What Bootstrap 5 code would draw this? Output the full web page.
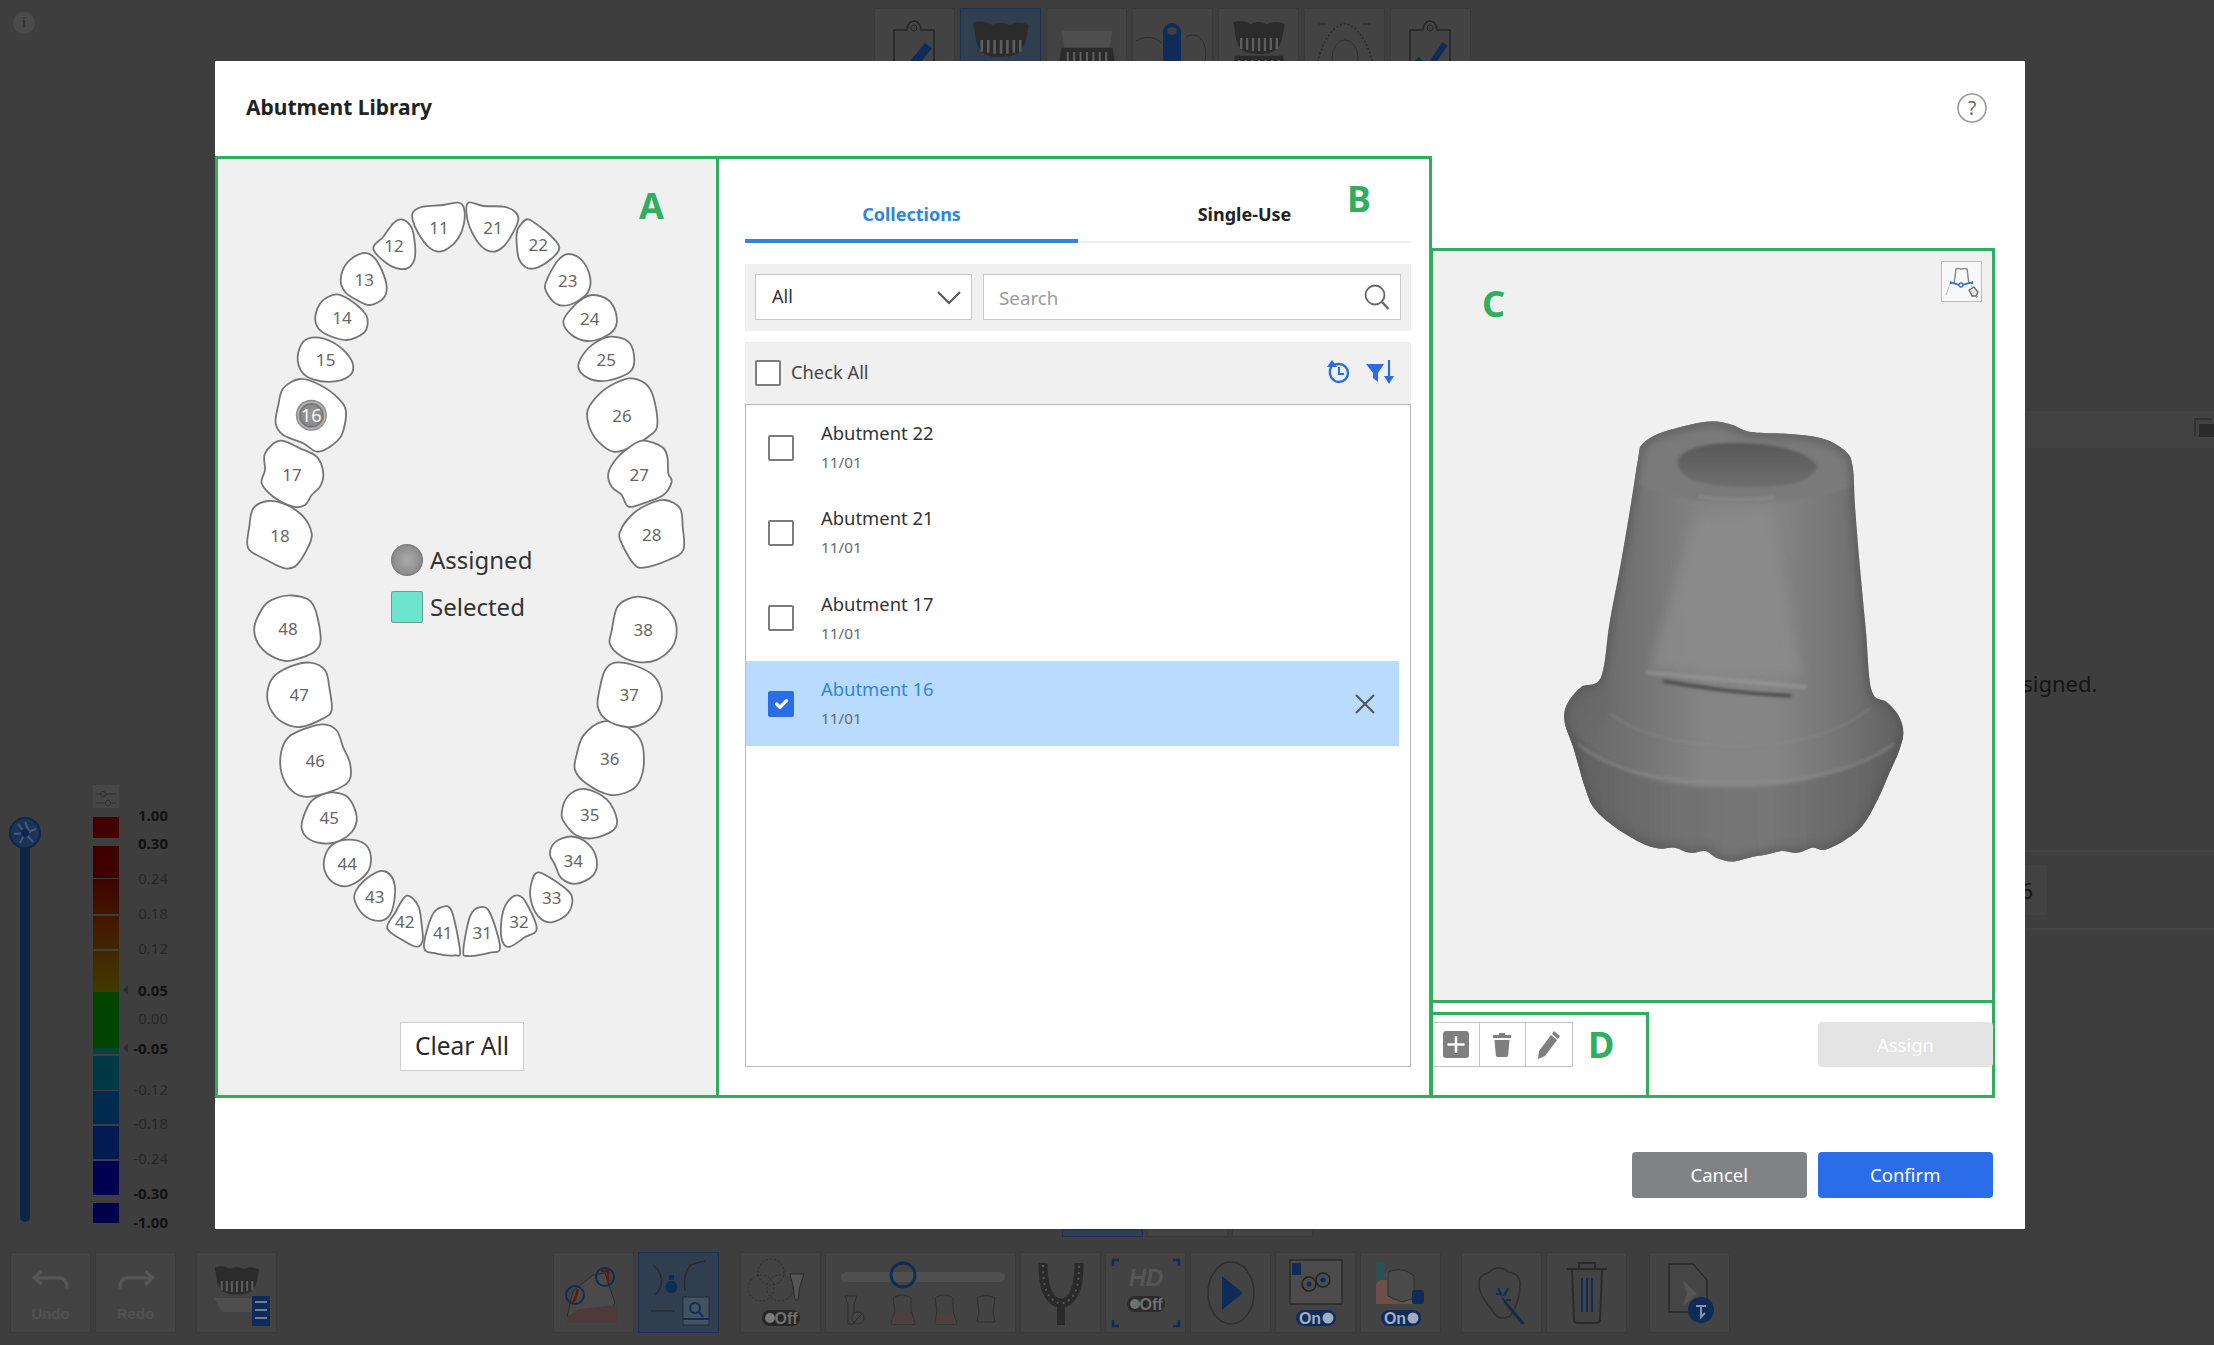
<!DOCTYPE html>
<html lang="en">
<head>
<meta charset="utf-8">
<title>Abutment Library</title>
<link href="https://cdn.jsdelivr.net/npm/bootstrap@5.3.0/dist/css/bootstrap.min.css" rel="stylesheet">
<style>
html,body{height:100%;margin:0;overflow:hidden;background:#3e3e3e;font-family:"Noto Sans","Open Sans",sans-serif;color:#212121}
.app-shell{height:1345px;width:2214px;position:relative;overflow:hidden}
.top-tools{height:88px;padding-top:8px;flex:none}
.info-dot{width:22px;height:22px;margin:4px 0 0 13px;border-radius:50%;background:#4a4a4a;color:#333;font:bold 14px/22px "Liberation Serif",serif;text-align:center}
.tb{background:#434343;border:1px solid #3a3a3a;flex:none;height:81px;width:81px;position:relative;display:flex;align-items:center;justify-content:center}
.tb svg{display:block}
.tb-on{background:#303f50;border-color:#1b3350}
.top-tools .tb{height:80px}
.tg-top{margin-left:839px;gap:5px}
.mid-row{flex:1 1 auto;min-height:0}
.slider-col{margin-left:9px;margin-top:729px;width:32px}
.slider-track{width:10px;height:374px;margin:-1px auto 0;background:#0e2646;border-radius:0 0 5px 5px}
.leg-col{margin-left:52px;margin-top:697px;width:26px}
.leg-set{height:23px;background:#474747;margin-bottom:9px}
.leg-lab{margin-top:717px;width:49px;font-size:15px;line-height:20px;text-align:right;color:#272727}
.leg-lab b{color:#111;font-weight:700}
.leg-lab div{position:relative}
.leg-tri{position:absolute;left:4px;top:5px;width:0;height:0;border:5px solid transparent;border-right-color:#2c2c2c;border-left:0}
.right-col{margin-left:auto;width:214px;padding-left:30px}
.r-inner{margin-left:-30px;height:100%;padding-top:323px;font-size:22px;color:#141414}
.r-band{height:37px;background:#424242;padding:5px 0 0}
.r-msg{margin-top:220px;margin-left:-144px;height:30px;line-height:30px;white-space:nowrap}
.r-line{height:2px;background:#444}
.r-line-a{margin-top:152px}
.r-box{margin:13px 0;width:47px;height:50px;background:#424242;line-height:50px;text-align:right;padding-right:14px}
.bottom-tools{flex:none;height:93px;padding-left:10px}
.bg{gap:4px}
.bg-b{margin-left:20px}.bg-c{margin-left:276px}.bg-d{margin-left:21px}.bg-e{margin-left:20px}.bg-f{margin-left:22px}
.bg .tb-wide{width:191px}
.tb-cap{position:absolute;bottom:10px;left:0;right:0;text-align:center;font:700 15px "Liberation Sans Narrow","Liberation Sans",sans-serif;color:#505050}
.tg-txt{font-family:"Liberation Sans Narrow","Liberation Sans",sans-serif;font-size:16px;font-weight:700;text-anchor:middle}
.modal-content.lib-dialog{position:absolute;left:215px;top:60.5px;width:1809.5px;height:1168.5px;background:#fff;border:0;border-radius:0;display:block}
.lib-head{height:95.5px;padding:0 38px 1px 31px}
.lib-title{font-size:21px;font-weight:700;color:#222;margin:0}
.help-dot{width:30px;height:30px}
.pane{border:3px solid #2fae5e;position:relative;flex:none}
.pane-a{width:504px;height:942px;background:#f0f0f0}
.pane-b{width:716px;height:942px;margin-left:-3px;padding:0 18px 0 26px;background:#fff}
.col-c{width:565px;margin-left:-2px;margin-top:92px;flex:none}
.pane-c1{height:755px;background:#f0f0f0}
.pane-c2{height:98px;margin-top:-3px;background:#fff}
.pane-d{width:219px;height:86px;margin-left:-3px;margin-bottom:-3px;padding-top:7px;flex:none}
.big-tag{position:absolute;font-size:36px;line-height:40px;font-weight:700;color:#2fae5e}
.tag-a{left:421px;top:27px}
.tag-b{left:628px;top:20px}
.tag-c{left:49px;top:33px}
.tag-d{left:155px;top:10px}
.teeth-svg{position:absolute;left:0;top:0;width:498px;height:936px}
.teeth-svg path{fill:#fff;stroke:#757575;stroke-width:1.8}
.teeth-svg text{font:400 17px "Noto Sans",sans-serif;fill:#666;text-anchor:middle;dominant-baseline:central}
.teeth-svg text.tooth-on{fill:#f8f8f8;font-size:18px}
.legend-wrap{position:relative;margin:377px 0 0 173px;font-size:24px;color:#333}
.legend-row{height:47.5px}
.sw-assigned{width:32px;height:32px;border-radius:50%;background:radial-gradient(circle,#ababab 0,#8d8d8d 62%,#6f6f6f 72%,#c0c0c0 82%,#808080 100%);margin-right:7px;flex:none}
.sw-selected{width:32px;height:32px;border-radius:2px;background:#6de4cd;border:1.5px solid #6f9a94;margin-right:7px;flex:none}
.btn.clear-btn{position:absolute;left:182px;top:863px;width:124px;height:49px;background:#fff;border:1px solid #cfcfcf;border-radius:0;font-size:24.5px;line-height:1;color:#2a2a2a;padding:0}
.lib-tabs{height:84px;border-bottom:2px solid #eee}
.lib-tabs .nav-link{flex:1 1 0;height:84px;padding:0 0 17px;display:flex;align-items:flex-end;justify-content:center;font-size:18px;line-height:24px;font-weight:700;color:#222;background:none;border:0;border-radius:0}
.lib-tabs .nav-link.active{color:#2f86dc;border-bottom:4px solid #2f86dc;margin-bottom:-2px;height:84px;padding-bottom:13px}
.filter-bar{margin-top:21px;height:67px;padding:10px;background:#f0f0f0;gap:11px}
.form-select.lib-select{width:217px;height:46px;flex:none;border:1.5px solid #c8c8c8;border-radius:0;padding:0 0 2px 16px;font-size:18px;color:#333;box-shadow:none;background-position:right 9px center;background-size:26px 16px;background-image:url("data:image/svg+xml,%3csvg xmlns='http://www.w3.org/2000/svg' viewBox='0 0 26 16'%3e%3cpath fill='none' stroke='%23555' stroke-width='2' d='M2 3l11 11L24 3'/%3e%3c/svg%3e")}
.search-box{flex:1 1 auto;position:relative}
.form-control.lib-search{height:46px;border:1.5px solid #c8c8c8;border-radius:0;padding:1px 50px 0 15px;font-size:18.8px}
.form-control.lib-search::placeholder{color:#9c9c9c;opacity:1}
.search-ic{position:absolute;right:10px;top:9px}
.check-bar{margin-top:11px;height:62px;padding:0 17px 2px 10px;background:#f0f0f0;font-size:18.3px;color:#444}
.form-check-input.lib-ck{width:26px;height:26px;margin:0;flex:none;border:2px solid #7c7c7c;border-radius:2px;background-color:#fff;box-shadow:none}
.form-check-input.lib-ck:checked{background-color:#2b6de8;border-color:#2b6de8;background-size:22px}
.check-bar .form-check-input{margin-top:2px}
.check-bar label{margin-left:10px}
.list-shell{height:663px;border:1.5px solid #bbb;border-top-width:1px;background:#fff;overflow:hidden}
.list-group.lib-list{margin-right:11px;border-radius:0}
.list-group-item.lib-item{height:85.33px;border:0;border-radius:0;padding:0 24px 0 22px;display:flex;align-items:center;background:transparent;font-size:18.4px;color:#333}
.list-group-item.lib-item.picked{background:#b9dbfd;color:#2f86dc}
.lib-item .item-txt{margin-left:27px;flex:1 1 auto;margin-top:-2px}
.item-name{line-height:24px;font-size:18.4px}
.item-date{line-height:20px;margin-top:7px;font-size:15.3px;color:#6a6a6a}
.view-thumb{position:absolute;right:10px;top:10px;width:41px;height:41px;background:#f8f8f8;border:1.5px solid #bdbdbd}
.model-svg{display:block;margin-left:127px;margin-top:165px}
.tool-btn{width:46.5px;height:45px;background:#fff;border:1.5px solid #c4c4c4;border-left-width:0;display:flex;align-items:center;justify-content:center;flex:none}
.btn.assign-btn{width:175px;height:45px;margin:19px -1px 0 auto;background:#e4e4e4;border:0;border-radius:4px;color:#fff;font-size:18.5px;padding:0;opacity:1}
.foot-row{margin-top:54px;padding-right:31.5px;gap:10.5px}
.btn.foot-btn{width:175.5px;height:46px;border:0;border-radius:4px;color:#fff;font-size:18.5px;padding:0}
.btn-cancel-x{background:#808285}
.btn-confirm-x{background:#2b6de8}
.under-tabs{left:1062px;top:1229px;gap:4px;height:8px}
.under-tabs div{width:81px;height:8px;background:#444;border:1px solid #393939}
.under-tabs div:first-child{background:#303f50;border-color:#1b3350}
</style>
</head>
<body>
<svg width="0" height="0" class="position-absolute">
<defs>
<symbol id="teethU" viewBox="0 0 60 40"><path fill="#2b2b2b" d="M4 4c8-3 14 0 18 2 4-3 10-3 16 0 6-3 12-3 18 0l-3 16c-3 9-8 14-23 14S10 32 7 22z"/><path stroke="#5e5e5e" stroke-width="2.4" d="M12 20v11M18 20v12M24 20v13M30 20v13M36 20v13M42 20v12M48 20v11"/></symbol>
<radialGradient id="ballG"><stop offset="0" stop-color="#9a9a9a"/><stop offset=".66" stop-color="#8a8a8a"/><stop offset=".74" stop-color="#6d6d6d"/><stop offset=".85" stop-color="#b9b9b9"/><stop offset="1" stop-color="#7d7d7d"/></radialGradient>
<linearGradient id="bodyG" x1="0" x2="1" y1="0" y2="0"><stop offset="0" stop-color="#666"/><stop offset=".2" stop-color="#727272"/><stop offset=".42" stop-color="#858585"/><stop offset=".62" stop-color="#858585"/><stop offset=".82" stop-color="#747474"/><stop offset="1" stop-color="#606060"/></linearGradient>
<linearGradient id="lowG" x1="0" x2="1" y1="0" y2="0"><stop offset="0" stop-color="#5e5e5e"/><stop offset=".3" stop-color="#6e6e6e"/><stop offset=".6" stop-color="#747474"/><stop offset="1" stop-color="#5e5e5e"/></linearGradient>
<linearGradient id="holeG" x1="0" x2="0" y1="0" y2="1"><stop offset="0" stop-color="#585858"/><stop offset="1" stop-color="#6e6e6e"/></linearGradient>
<filter id="soft" x="-20%" y="-20%" width="140%" height="140%"><feGaussianBlur stdDeviation="14"/></filter>
<filter id="soft2" x="-20%" y="-60%" width="140%" height="220%"><feGaussianBlur stdDeviation="4"/></filter>
<filter id="soft3" x="-10%" y="-10%" width="120%" height="120%"><feGaussianBlur stdDeviation="10"/></filter>
<clipPath id="modelClip"><path id="modelClipPath"/></clipPath>
</defs>
</svg>

<div class="app-shell d-flex flex-column">
  <div class="top-tools d-flex align-items-start">
    <div class="info-dot">i</div>
    <div class="tg-top d-flex">
      <div class="tb"><svg width="60" height="70" viewBox="0 0 60 70"><path fill="none" stroke="#262626" stroke-width="1.6" d="M9 17h13c0-12 14-12 14 0h13v50H9z"/><circle cx="29" cy="15" r="3" fill="none" stroke="#262626"/><path fill="#0f2c58" d="M40 30l7 5-19 24-10 5 3-11z"/></svg></div>
      <div class="tb tb-on"><svg width="64" height="44" class="mb-3"><use href="#teethU"/></svg></div>
      <div class="tb"><svg width="64" height="44" class="mt-2" viewBox="0 0 60 40"><path fill="#4e4e4e" d="M6 0h48l-3 16H9z"/><path fill="#2b2b2b" d="M6 16h48l3 20H3z"/><path stroke="#5e5e5e" stroke-width="2" d="M12 20v11M18 20v11M24 20v11M30 20v11M36 20v11M42 20v11M48 20v11"/></svg></div>
      <div class="tb"><svg width="78" height="70" viewBox="0 0 78 70"><path fill="none" stroke="#2c2c2c" d="M2 28c10-6 20-4 25 2M2 50c10 4 20 2 25-2M52 24c14-8 24 10 18 26"/><rect x="29" y="10" width="18" height="60" rx="9" fill="#0f2c58"/><ellipse cx="38" cy="18" rx="5" ry="4" fill="#3f3f3f"/></svg></div>
      <div class="tb"><svg width="66" height="60" viewBox="0 0 60 54"><use href="#teethU" width="60" height="36"/><path fill="#2b2b2b" d="M8 34h44l3 20H5z"/><path stroke="#5e5e5e" stroke-width="2" d="M12 38v10M18 38v10M24 38v10M30 38v10M36 38v10M42 38v10M48 38v10"/></svg></div>
      <div class="tb"><svg width="64" height="64" viewBox="0 0 64 64"><ellipse cx="32" cy="42" rx="13" ry="18" fill="none" stroke="#2c2c2c"/><path fill="none" stroke="#2c2c2c" stroke-dasharray="2 2" stroke-width="1.5" d="M4 50C8 25 22 8 32 8s24 17 28 42"/><path fill="none" stroke="#2c2c2c" d="M6 8h8M50 8h8"/></svg></div>
      <div class="tb"><svg width="60" height="70" viewBox="0 0 60 70"><path fill="none" stroke="#262626" stroke-width="1.6" d="M9 17h13c0-12 14-12 14 0h13v50H9z"/><circle cx="29" cy="15" r="3" fill="none" stroke="#262626"/><path fill="none" stroke="#0f2c58" stroke-width="6" d="M16 46l10 11 18-26"/></svg></div>
    </div>
  </div>

  <div class="mid-row d-flex">
    <div class="slider-col flex-none">
      <svg width="32" height="32" viewBox="0 0 32 32"><circle cx="16" cy="16" r="15" fill="#1a3358" stroke="#10254a" stroke-width="2"/><g fill="none" stroke="#415b7d" stroke-width="2"><path d="M16 5l5 11M27 12l-11 4M24 25l-8-9M11 26l5-10M5 17l11-1M9 7l7 9"/></g><circle cx="16" cy="16" r="4" fill="#10254a"/></svg>
      <div class="slider-track"></div>
    </div>
    <div class="leg-col">
      <div class="leg-set"><svg width="26" height="23" viewBox="0 0 26 23"><path fill="none" stroke="#2e2e2e" d="M3 7h5M13 7h10M3 16h10M18 16h5"/><circle cx="10" cy="7" r="2.6" fill="none" stroke="#2e2e2e"/><circle cx="15" cy="16" r="2.6" fill="none" stroke="#2e2e2e"/></svg></div>
      <div style="height:21px;background:#420000"></div>
      <div style="height:32px;margin-top:8px;background:#3e0000"></div>
      <div style="height:35px;margin-top:1px;background:linear-gradient(#3e0300,#421400)"></div>
      <div style="height:33px;margin-top:2px;background:linear-gradient(#421600,#422500)"></div>
      <div style="height:41px;margin-top:2px;background:linear-gradient(#422700,#413a00)"></div>
      <div style="height:56px;background:#004400"></div>
      <div style="height:6px;background:#02443a"></div>
      <div style="height:34px;margin-top:2px;background:#003846"></div>
      <div style="height:33px;margin-top:1px;background:#002a50"></div>
      <div style="height:33px;margin-top:2px;background:#001a52"></div>
      <div style="height:34px;margin-top:2px;background:#000050"></div>
      <div style="height:20px;margin-top:8px;background:#00004c"></div>
    </div>
    <div class="leg-lab">
      <div style="height:28px"><b>1.00</b></div>
      <div style="height:35px"><b>0.30</b></div>
      <div style="height:35px">0.24</div>
      <div style="height:35px">0.18</div>
      <div style="height:42px">0.12</div>
      <div style="height:28px"><span class="leg-tri"></span><b>0.05</b></div>
      <div style="height:30px">0.00</div>
      <div style="height:41px"><span class="leg-tri"></span><b>-0.05</b></div>
      <div style="height:34px">-0.12</div>
      <div style="height:35px">-0.18</div>
      <div style="height:35px">-0.24</div>
      <div style="height:29px"><b>-0.30</b></div>
      <div style="height:20px"><b>-1.00</b></div>
    </div>
    <div class="right-col">
      <div class="r-inner">
        <div class="r-band"><svg width="214" height="24" class="d-block" viewBox="0 0 214 24"><path fill="none" stroke="#2c2c2c" stroke-width="1.5" d="M212 3h-17v17"/><rect x="199" y="8" width="15" height="13" fill="#2a2a2a"/></svg></div>
        <div class="r-msg">No abutment assigned.</div>
        <div class="r-line r-line-a"></div>
        <div class="r-box">16</div>
        <div class="r-line"></div>
      </div>
    </div>
  </div>

  <div class="bottom-tools d-flex align-items-start">
    <div class="d-flex bg">
      <div class="tb"><svg width="40" height="27" class="mb-4" viewBox="0 0 60 40"><path fill="none" stroke="#565656" stroke-width="5" d="M16 6L5 16l11 10M6 16h36c8 0 12 5 12 16"/></svg><span class="tb-cap">Undo</span></div>
      <div class="tb"><svg width="40" height="27" class="mb-4" viewBox="0 0 60 40"><path fill="none" stroke="#565656" stroke-width="5" d="M44 6l11 10-11 10M54 16H18C10 16 6 21 6 32"/></svg><span class="tb-cap">Redo</span></div>
    </div>
    <div class="d-flex bg bg-b">
      <div class="tb"><svg width="70" height="66" viewBox="0 0 70 66"><use href="#teethU" x="6" y="4" width="58" height="34"/><path fill="#4e4e4e" d="M12 38h46l-8 14H20z"/><rect x="50" y="36" width="18" height="30" fill="#0f2c58"/><path stroke="#6c7d97" stroke-width="2" d="M53 42h12M53 50h12M53 58h12"/></svg></div>
    </div>
    <div class="d-flex bg bg-c">
      <div class="tb"><svg width="66" height="68" viewBox="0 0 66 68"><path fill="#4a4a4a" stroke="#2a2a2a" d="M6 58l6-26 20-16 12-2 10 30-6 8-20 4z"/><path fill="#4d3a3a" d="M6 58l12-8 38-4v18H6z"/><circle cx="14" cy="36" r="9" fill="none" stroke="#0f2c58" stroke-width="2"/><circle cx="44" cy="18" r="9" fill="none" stroke="#0f2c58" stroke-width="2"/><path fill="none" stroke="#66170e" stroke-width="2.500" d="M11 44c5-4 4-10 6-14M40 12h7v12"/></svg></div>
      <div class="tb tb-on"><svg width="68" height="72" viewBox="0 0 68 72"><path fill="none" stroke="#2a2a2a" stroke-width="1.5" d="M8 8c10 8 12 20 2 30M60 4c-8 2-14 2-16 6s-6 8-4 24M6 54h24"/><path fill="#0f2c58" d="M26 24a6 6 0 1 0 1 0zM24 18h5v5h-5z"/><rect x="38" y="40" width="26" height="28" fill="#45525f" stroke="#1a2c44"/><circle cx="50" cy="51" r="5" fill="none" stroke="#0f2c58" stroke-width="2"/><path stroke="#0f2c58" stroke-width="2" d="M54 55l4 5M38 62h26"/></svg></div>
    </div>
    <div class="d-flex bg bg-d">
      <div class="tb"><svg width="74" height="70" viewBox="0 0 74 70"><g fill="none" stroke="#2e2e2e" stroke-dasharray="2 2"><circle cx="27" cy="14" r="13"/><circle cx="17" cy="30" r="13"/><circle cx="36" cy="30" r="13"/></g><path fill="#555" stroke="#2a2a2a" d="M46 16h14l-4 12-2 14h-3l-2-14z"/><rect x="18" y="52" width="38" height="16" rx="8" fill="#262626"/><circle cx="26" cy="60" r="5" fill="#7a7a7a"/><text class="tg-txt" x="42" y="65.500" fill="#707070">Off</text></svg></div>
      <div class="tb tb-wide"><svg width="180" height="70" viewBox="0 0 180 70"><rect x="10" y="14" width="164" height="10" rx="5" fill="#4f4f4f"/><circle cx="72" cy="17" r="12" fill="none" stroke="#0f2c58" stroke-width="3"/><g fill="none" stroke="#2e2e2e"><path d="M14 38h12l-3 8v20h-6V46zM62 40c6-4 12-4 18 0v12l4 14H60l4-14zM104 40c6-4 12-4 18 0v12l4 14h-22l2-14zM146 40c6-3 12-3 18 0l-2 14 2 10h-18l2-10z"/></g><circle cx="27" cy="60" r="6" fill="#444" stroke="#2e2e2e"/><path stroke="#2e2e2e" d="M23 64l8-8"/><path fill="#4d4040" d="M60 66l4-12h16l4 12zM104 66l2-10h16l4 10z"/></svg></div>
      <div class="tb"><svg width="50" height="68" viewBox="0 0 50 68"><path fill="none" stroke="#2a2a2a" stroke-width="9" d="M7 4c0 18 2 30 10 37 3 3 5 3 8 3s5 0 8-3c8-7 10-19 10-37"/><path fill="none" stroke="#555" stroke-width="2" stroke-dasharray="2 4" d="M7 6c0 18 2 28 10 35 3 3 5 3 8 3s5 0 8-3c8-7 10-17 10-35"/><rect x="21" y="46" width="8" height="20" fill="#2a2a2a"/></svg></div>
      <div class="tb"><svg width="72" height="70" viewBox="0 0 72 70"><path fill="none" stroke="#0f2c58" stroke-width="2.500" d="M3 8V2h6M69 8V2h-6M3 62v6h6M69 62v6h-6"/><text x="36" y="28" font-family="Liberation Sans,sans-serif" font-size="24" font-style="italic" font-weight="700" fill="#565656" text-anchor="middle">HD</text><rect x="17" y="38" width="38" height="16" rx="8" fill="#2a2a2a"/><circle cx="25" cy="46" r="5" fill="#707070"/><text class="tg-txt" x="41" y="51.500" fill="#707070">Off</text></svg></div>
      <div class="tb"><svg width="54" height="66" viewBox="0 0 54 66"><ellipse cx="27" cy="33" rx="23" ry="31" fill="none" stroke="#2e2e2e" stroke-width="1.5"/><path fill="#0f2c58" d="M18 16l21 17-21 17z"/></svg></div>
      <div class="tb"><svg width="62" height="70" viewBox="0 0 62 70"><rect x="5" y="2" width="52" height="44" fill="#4c4c4c" stroke="#2a2a2a" stroke-width="1.5"/><rect x="7" y="5" width="9" height="12" fill="#0f2c58"/><circle cx="24" cy="26" r="7" fill="none" stroke="#222" stroke-width="1.5"/><circle cx="38" cy="22" r="7" fill="none" stroke="#222" stroke-width="1.5"/><circle cx="24" cy="26" r="2.500" fill="#0f2c58"/><circle cx="38" cy="22" r="2.500" fill="#0f2c58"/><rect x="11" y="52" width="40" height="16" rx="8" fill="#0f2c58"/><text class="tg-txt" x="25" y="65.500" fill="#a0aec4">On</text><circle cx="43" cy="60" r="5.500" fill="#a0aec4"/></svg></div>
      <div class="tb"><svg width="62" height="70" viewBox="0 0 62 70"><path fill="#6b5046" d="M6 26v20h40v-4H22l-3-30z"/><path fill="#2e5053" d="M6 4h8l3 18H6z"/><path fill="#4a4a4a" stroke="#2e2e2e" d="M18 14c6-3 14-3 20 0l6 4v22l-12 4-14-6z"/><rect x="42" y="32" width="12" height="14" rx="2" fill="#0f2c58"/><rect x="11" y="52" width="40" height="16" rx="8" fill="#0f2c58"/><text class="tg-txt" x="25" y="65.500" fill="#a0aec4">On</text><circle cx="43" cy="60" r="5.500" fill="#a0aec4"/></svg></div>
    </div>
    <div class="d-flex bg bg-e">
      <div class="tb"><svg width="56" height="66" viewBox="0 0 56 66"><path fill="none" stroke="#2e2e2e" stroke-width="1.5" d="M6 18c4-6 8-4 12-8 4-3 12-3 16 2 6 0 12 4 12 12 0 14-4 24-10 32-8 4-14 2-18-6C10 40 2 30 6 18z"/><path stroke="#0f2c58" stroke-width="2" d="M24 28l4 8M34 28l-4 8M22 34h5M32 40h5M28 38l22 26"/><path stroke="#2a2a2a" stroke-width="1.500" d="M30 42l18 22"/></svg></div>
      <div class="tb"><svg width="46" height="66" viewBox="0 0 46 66"><path fill="none" stroke="#2a2a2a" stroke-width="2" d="M15 8V3h16v5M3 9h40M8 9l2 50c0 3 2 4 4 4h18c2 0 4-1 4-4l2-50"/><path stroke="#0f2c58" stroke-width="2" d="M18 18v34M23 18v34M28 18v34"/></svg></div>
    </div>
    <div class="d-flex bg bg-f">
      <div class="tb"><svg width="54" height="66" viewBox="0 0 54 66"><path fill="#454545" stroke="#2a2a2a" stroke-width="1.500" d="M6 4h24l14 16v32H6z"/><path fill="#555" d="M20 20l14 14-14 12 4-12z"/><circle cx="38" cy="50" r="13" fill="#0f2c58"/><path fill="none" stroke="#8293ad" stroke-width="2" d="M33 46h10M38 46v11l4-4"/></svg></div>
    </div>
  </div>

  <div class="under-tabs position-absolute d-flex"><div></div><div></div><div></div></div>

  <div class="modal-content lib-dialog">
    <div class="lib-head d-flex align-items-center justify-content-between">
      <h5 class="lib-title">Abutment Library</h5>
      <svg class="help-dot" viewBox="0 0 30 30"><circle cx="15" cy="15" r="14" fill="#fff" stroke="#9a9a9a" stroke-width="1.600"/><text x="15" y="21.500" font-family="Noto Sans,sans-serif" font-size="19" fill="#666" text-anchor="middle">?</text></svg>
    </div>
    <div class="d-flex align-items-start">
      <section class="pane pane-a d-flex flex-column">
        <svg id="teeth" class="teeth-svg" viewBox="218 159 498 936"></svg>
        <span class="big-tag tag-a">A</span>
        <div class="legend-wrap">
          <div class="legend-row d-flex align-items-center"><span class="sw-assigned"></span><span>Assigned</span></div>
          <div class="legend-row d-flex align-items-center"><span class="sw-selected"></span><span>Selected</span></div>
        </div>
        <button type="button" class="btn clear-btn">Clear All</button>
      </section>

      <section class="pane pane-b">
        <span class="big-tag tag-b">B</span>
        <div class="nav lib-tabs d-flex">
          <a class="nav-link active" href="#">Collections</a>
          <a class="nav-link" href="#">Single-Use</a>
        </div>
        <div class="filter-bar d-flex">
          <select class="form-select lib-select"><option>All</option></select>
          <div class="search-box">
            <input class="form-control lib-search" type="text" placeholder="Search">
            <svg class="search-ic" width="28" height="28" viewBox="0 0 28 28"><circle cx="12" cy="12" r="9.500" fill="none" stroke="#666" stroke-width="1.800"/><path stroke="#666" stroke-width="2.400" d="M19 19l6.500 7"/></svg>
          </div>
        </div>
        <div class="check-bar d-flex align-items-center">
          <input class="form-check-input lib-ck" type="checkbox" id="ckAll">
          <label for="ckAll">Check All</label>
          <svg class="ms-auto" width="24" height="24" viewBox="0 0 24 24"><path fill="none" stroke="#2b6de0" stroke-width="2.400" d="M6 5c-2 4-3 6-2 9 1 5 5 8 9 8 5 0 9-4 9-9s-4-9-9-9c-2 0-3 0-5 1"/><path fill="#2b6de0" d="M6 0l5 7H1z"/><path fill="none" stroke="#2b6de0" stroke-width="2" d="M13 7v7h5"/></svg>
          <svg class="ms-3" width="28" height="24" viewBox="0 0 28 24"><path fill="#2b6de0" d="M0 4h18l-6 9v9l-5-4v-5z"/><path stroke="#2b6de0" stroke-width="2.200" d="M23 0v19"/><path fill="#2b6de0" d="M18 16h10l-5 8z"/></svg>
        </div>
        <div class="list-shell">
          <div class="list-group lib-list">
            <div class="list-group-item lib-item"><input class="form-check-input lib-ck" type="checkbox" aria-label="Abutment 22"><div class="item-txt"><div class="item-name">Abutment 22</div><div class="item-date">11/01</div></div></div>
            <div class="list-group-item lib-item"><input class="form-check-input lib-ck" type="checkbox" aria-label="Abutment 21"><div class="item-txt"><div class="item-name">Abutment 21</div><div class="item-date">11/01</div></div></div>
            <div class="list-group-item lib-item"><input class="form-check-input lib-ck" type="checkbox" aria-label="Abutment 17"><div class="item-txt"><div class="item-name">Abutment 17</div><div class="item-date">11/01</div></div></div>
            <div class="list-group-item lib-item picked"><input class="form-check-input lib-ck" type="checkbox" checked aria-label="Abutment 16"><div class="item-txt"><div class="item-name">Abutment 16</div><div class="item-date">11/01</div></div><svg width="20" height="20" viewBox="0 0 20 20"><path stroke="#555" stroke-width="2" d="M1 1l18 18M19 1L1 19"/></svg></div>
          </div>
        </div>
      </section>

      <div class="col-c">
        <section class="pane pane-c1">
          <span class="big-tag tag-c">C</span>
          <div class="view-thumb"><svg width="38" height="38" viewBox="0 0 38 38" class="d-block"><path fill="none" stroke="#8d8d8d" stroke-width="1.500" d="M12 22l2-15c2-1 3 0 5 0s4-1 6 0l2 15"/><path fill="none" stroke="#bbb" d="M8 22l-4 11M29 24l3 2"/><path fill="none" stroke="#3d70cf" stroke-width="1.800" d="M8 20c4 1 7 3 11 3s8-2 12-3"/><circle cx="19" cy="23" r="2" fill="#f8f8f8" stroke="#3d70cf" stroke-width="1.300"/><circle cx="9" cy="21" r="1.300" fill="#3d70cf"/><circle cx="30" cy="21" r="1.300" fill="#3d70cf"/><path fill="#e6e6e6" stroke="#666" stroke-width="1.300" d="M27 28l5-3 4 5-2 4-4 0z"/><path stroke="#999" d="M34 36l2-2"/></svg></div>
          <svg class="model-svg" width="348" height="449" viewBox="340 405 910 1035" preserveAspectRatio="none">
            <path id="modelSil" fill="url(#bodyG)"/>
            <g clip-path="url(#modelClip)">
              <path fill="url(#lowG)" opacity=".85" filter="url(#soft2)" d="M340 1100C500 1260 620 1260 800 1262 1000 1262 1120 1220 1260 1120V1440H340z"/>
              <path fill="#696969" opacity=".7" filter="url(#soft)" d="M350 1040l100-20 30 60-50 50-80 20z"/>
              <path fill="#8b8b8b" opacity=".8" filter="url(#soft)" d="M690 640l200-20 85 390-400-20z"/>
              <path fill="#7a7a7a" filter="url(#soft2)" d="M540 470L640 425 745 415 845 440 960 445 1050 460 1110 500 1112 565C1000 600 900 605 790 605 680 605 600 590 535 555z"/>
              <path fill="url(#holeG)" filter="url(#soft2)" d="M648 505C670 475 740 465 825 468 900 470 990 485 1012 520 1005 550 950 565 880 568 800 572 720 565 680 550 660 540 645 525 648 505z"/>
              <path fill="none" stroke="#939393" stroke-width="6" opacity=".7" filter="url(#soft2)" d="M700 590C770 600 850 600 900 592"/>
              <path fill="none" stroke="#9d9d9d" stroke-width="10" opacity=".55" filter="url(#soft2)" d="M565 996C680 1005 860 1020 985 1030"/>
              <path fill="none" stroke="#4e4e4e" stroke-width="9" filter="url(#soft2)" d="M610 1016C700 1030 820 1045 945 1050"/>
              <path fill="none" stroke="#8f8f8f" stroke-width="8" opacity=".55" filter="url(#soft2)" d="M385 1160C500 1240 650 1250 810 1250 980 1250 1120 1220 1215 1160"/>
              <path fill="none" stroke="#8a8a8a" stroke-width="7" opacity=".4" filter="url(#soft2)" d="M470 1090C560 1150 680 1165 820 1165 950 1165 1060 1140 1150 1080"/>
              <path id="modelEdge" fill="none" stroke="#505050" stroke-width="20" opacity=".55" filter="url(#soft3)"/>
            </g>
          </svg>
        </section>
        <section class="pane pane-c2 d-flex align-items-start">
          <div class="pane pane-d d-flex align-items-start align-self-end">
            <span class="big-tag tag-d">D</span>
            <div class="tool-btn"><svg width="26" height="27" viewBox="0 0 26 27"><rect width="26" height="27" rx="3" fill="#7f7f7f"/><path stroke="#fff" stroke-width="2.500" d="M13 5v17M4.500 13.500h17"/></svg></div>
            <div class="tool-btn"><svg width="18" height="24" viewBox="0 0 18 24"><path fill="#7f7f7f" d="M6 0h6v2h6v3H0V2h6zM1.500 7h15l-1.300 15c0 1-1 2-2 2H4.800c-1 0-2-1-2-2z"/></svg></div>
            <div class="tool-btn"><svg width="22" height="28" viewBox="0 0 22 28"><path fill="#7f7f7f" d="M16 0l6 5-2 3-6-5zM13 4l6 5L7 25l-7 3 1-8z"/></svg></div>
          </div>
          <button type="button" class="btn assign-btn">Assign</button>
        </section>
      </div>
    </div>
    <div class="foot-row d-flex justify-content-end">
      <button type="button" class="btn foot-btn btn-cancel-x">Cancel</button>
      <button type="button" class="btn foot-btn btn-confirm-x">Confirm</button>
    </div>
  </div>
</div>

<script>
var upper={
11:[687,501,[610,455,640,440,700,435,745,428,762,445,762,490,745,535,715,565,685,575,655,560,625,520,608,480]],
21:[849,501,[775,428,820,438,880,440,915,455,925,480,905,525,880,560,848,575,815,560,785,515,770,465]],
12:[552,555,[573,478,600,495,612,530,615,590,600,620,570,627,530,610,490,565,520,530,550,490]],
22:[985,553,[955,478,990,500,1030,535,1048,565,1020,600,975,625,945,620,925,590,920,520,935,490]],
13:[463,657,[455,580,490,590,515,630,530,680,520,715,480,735,440,720,405,695,392,660,410,610]],
23:[1073,660,[1075,582,1115,600,1140,650,1135,695,1100,725,1060,737,1030,725,1005,685,1015,650,1045,600]],
14:[396,773,[378,703,420,720,465,760,473,790,460,820,410,840,360,828,325,805,316,770,335,725]],
24:[1139,775,[1150,705,1195,720,1218,760,1215,805,1175,835,1130,843,1085,825,1060,785,1085,745,1120,715]],
15:[347,899,[315,832,365,845,410,880,430,920,415,950,365,965,310,958,275,935,263,890,280,845]],
25:[1189,897,[1205,830,1255,845,1272,885,1265,930,1220,955,1165,963,1120,945,1105,915,1130,870,1170,840]],
16:[304,1066,[270,957,330,975,385,1015,408,1055,395,1125,360,1160,320,1175,280,1150,220,1125,197,1090,205,1035,220,985]],
26:[1236,1067,[1260,955,1305,970,1330,1010,1342,1095,1315,1130,1255,1165,1210,1175,1165,1145,1138,1100,1133,1050,1170,1000,1215,970]],
17:[246,1242,[210,1142,270,1165,320,1190,340,1240,330,1280,305,1305,285,1335,250,1340,190,1310,155,1270,165,1230,165,1180]],
27:[1288,1243,[1300,1142,1355,1160,1372,1190,1375,1240,1385,1265,1360,1305,1300,1330,1255,1340,1235,1305,1205,1280,1195,1240,1220,1195,1260,1160]],
18:[210,1425,[175,1323,230,1335,280,1370,305,1420,295,1460,260,1515,225,1525,170,1500,115,1465,118,1400,130,1345]],
28:[1325,1423,[1365,1320,1410,1345,1418,1400,1420,1470,1375,1500,1300,1523,1270,1510,1235,1450,1230,1415,1265,1365,1310,1335]]
};
var lower={
48:[234,198,[245,103,295,115,318,150,332,230,315,265,270,285,225,293,170,270,138,230,135,185,165,130,200,110]],
38:[1300,203,[1290,107,1350,125,1390,165,1400,210,1385,255,1340,290,1290,297,1235,280,1200,245,1205,205,1220,140,1250,115]],
47:[268,392,[300,298,345,320,358,370,365,435,340,460,270,485,215,470,180,430,172,385,190,340,240,310]],
37:[1258,391,[1215,298,1270,305,1330,335,1355,385,1345,435,1300,475,1250,485,1190,465,1163,425,1170,370,1185,320]],
46:[316,582,[340,477,380,495,400,545,420,590,418,640,370,670,290,688,245,670,215,620,213,560,235,515,285,490]],
36:[1199,576,[1175,470,1240,480,1290,520,1302,580,1290,640,1260,670,1200,682,1130,650,1095,610,1100,565,1120,510]],
45:[358,747,[370,675,415,690,440,745,425,790,375,820,320,820,285,800,275,765,300,705,335,682]],
35:[1139,738,[1125,665,1190,695,1220,750,1210,785,1150,808,1100,800,1065,765,1055,735,1075,685]],
44:[412,881,[415,812,465,825,483,865,470,910,420,945,375,940,345,905,345,860,370,825]],
34:[1090,872,[1085,803,1135,825,1160,870,1150,915,1100,940,1055,925,1035,885,1020,855,1035,820]],
43:[494,976,[520,903,548,925,555,970,540,1030,505,1048,460,1030,433,985,445,950,485,915]],
33:[1025,980,[985,907,1040,935,1085,975,1075,1025,1025,1052,985,1035,962,985,965,935]],
42:[584,1051,[590,975,625,1005,635,1060,638,1105,620,1123,580,1105,532,1070,555,1025]],
32:[927,1051,[915,975,945,990,980,1070,945,1095,900,1123,878,1110,873,1060,885,1005]],
41:[698,1081,[695,1008,725,1020,750,1135,735,1148,680,1143,642,1125,665,1035]],
31:[817,1081,[810,1008,840,1025,870,1125,840,1140,775,1150,760,1135,780,1035]]
};
function smooth(p){
  var n=p.length,d='M'+p[0][0].toFixed(1)+' '+p[0][1].toFixed(1);
  for(var i=0;i<n;i++){
    var a=p[(i-1+n)%n],b=p[i],c=p[(i+1)%n],e=p[(i+2)%n];
    d+='C'+(b[0]+(c[0]-a[0])/6).toFixed(1)+' '+(b[1]+(c[1]-a[1])/6).toFixed(1)+' '+(c[0]-(e[0]-b[0])/6).toFixed(1)+' '+(c[1]-(e[1]-b[1])/6).toFixed(1)+' '+c[0].toFixed(1)+' '+c[1].toFixed(1);
  }
  return d+'Z';
}
var NS='http://www.w3.org/2000/svg',host=document.getElementById('teeth');
function addTeeth(set,ox,oy,sx,sy){
  Object.keys(set).forEach(function(k){
    var t=set[k],pts=[];
    for(var i=0;i<t[2].length;i+=2)pts.push([ox+t[2][i]/sx,oy+t[2][i+1]/sy]);
    var p=document.createElementNS(NS,'path');p.setAttribute('d',smooth(pts));host.appendChild(p);
    var x=ox+t[0]/sx,y=oy+t[1]/sy;
    if(k==='16'){var c=document.createElementNS(NS,'circle');c.setAttribute('cx',x);c.setAttribute('cy',y);c.setAttribute('r',15.5);c.setAttribute('fill','url(#ballG)');host.appendChild(c);}
    var s=document.createElementNS(NS,'text');s.setAttribute('x',x);s.setAttribute('y',y);s.textContent=k;
    if(k==='16'){s.setAttribute('class','tooth-on');}
    host.appendChild(s);
  });
}
addTeeth(upper,210,60,3,3);
addTeeth(lower,210,560,3,2.904);
var sil=[[555,470],[600,445],[680,425],[740,417],[790,425],[840,442],[950,447],[1030,458],[1085,485],[1105,520],[1112,620],[1125,760],[1140,900],[1155,1038],[1195,1065],[1225,1095],[1238,1135],[1225,1180],[1200,1230],[1170,1290],[1130,1350],[1080,1385],[1030,1405],[1000,1400],[960,1412],[920,1408],[880,1416],[840,1422],[790,1432],[750,1424],[720,1408],[680,1412],[640,1400],[600,1402],[550,1388],[480,1350],[430,1310],[405,1260],[375,1170],[352,1110],[358,1070],[395,1030],[447,1008],[470,880],[500,740],[525,610],[545,500]];
var sd=smooth(sil);
document.getElementById('modelSil').setAttribute('d',sd);
document.getElementById('modelClipPath').setAttribute('d',sd);
document.getElementById('modelEdge').setAttribute('d',sd);
</script>
<script src="https://cdn.jsdelivr.net/npm/bootstrap@5.3.0/dist/js/bootstrap.bundle.min.js"></script>
</body>
</html>
